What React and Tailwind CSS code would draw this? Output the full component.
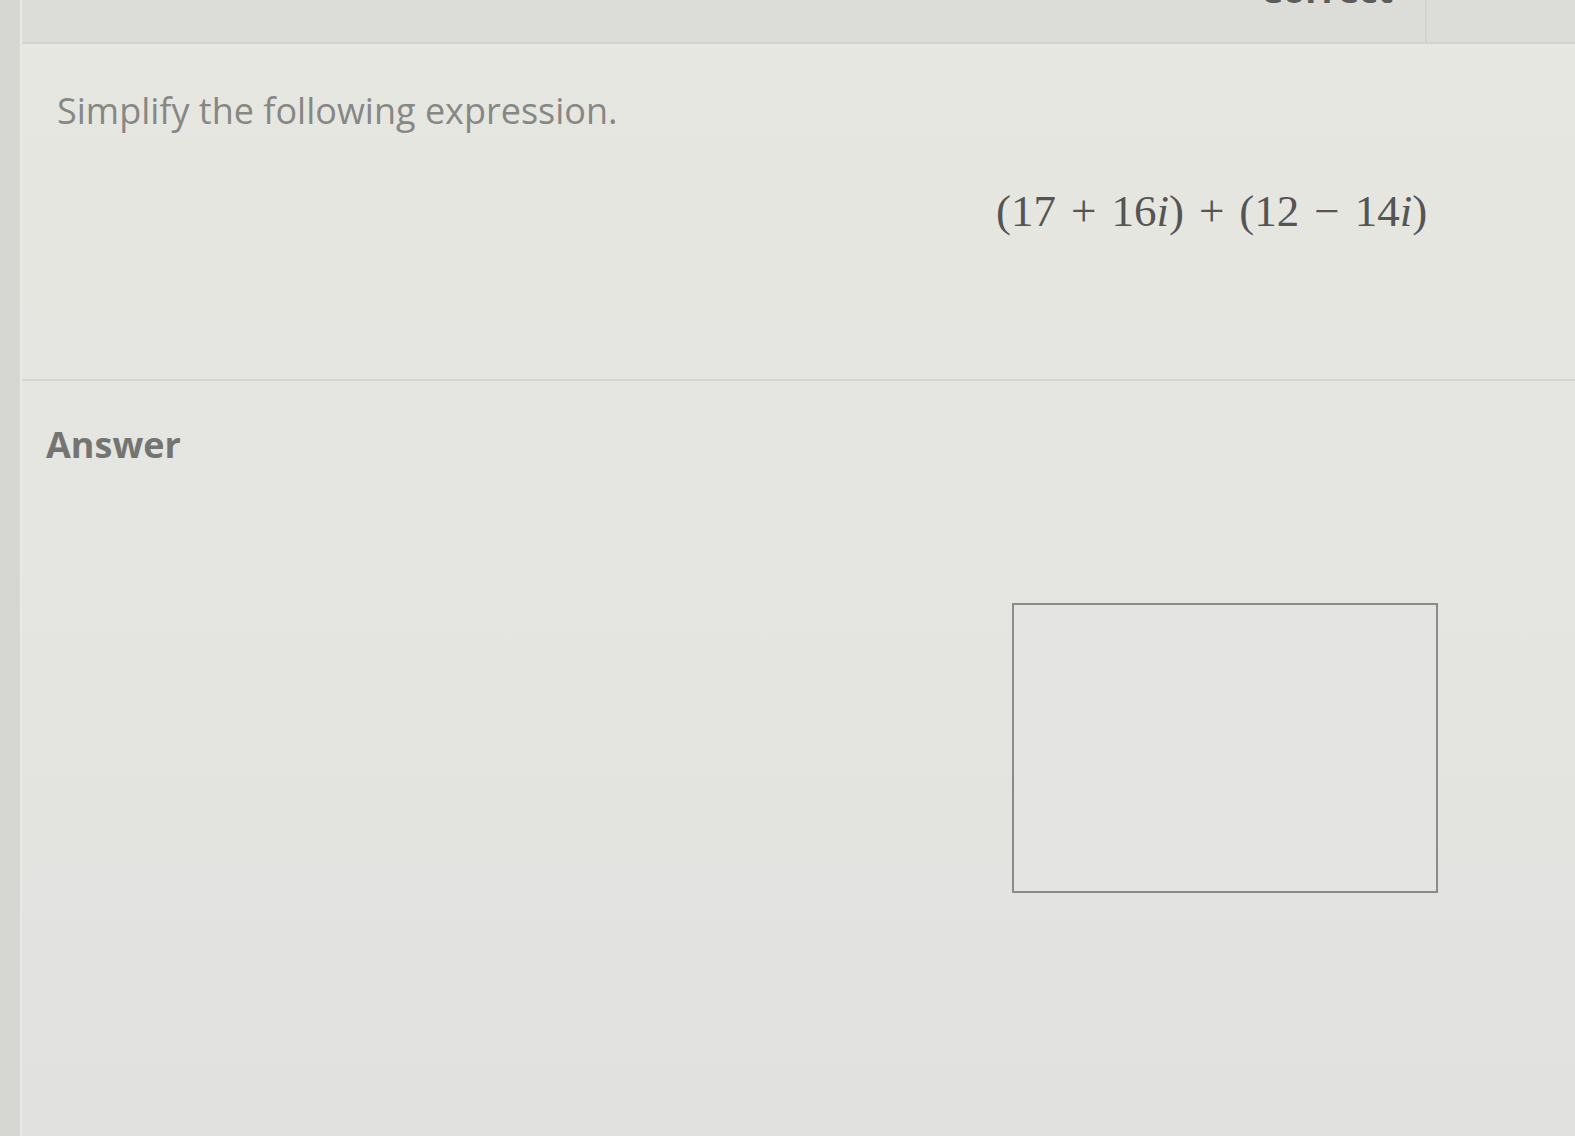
export default function App() {
  return (
    <div className="flex h-[1136px] w-full overflow-hidden bg-[#d5d5d2] font-['Open_Sans',sans-serif]">
      {/* left gutter */}
      <div className="w-[20px] shrink-0 bg-[#d6d6d3]" />

      <div className="flex flex-1 flex-col bg-linear-to-b from-[#e7e7e1] via-[#e5e5e1] to-[#e1e1e0] border-l-2 border-[#e9e9e6]">
        {/* status bar */}
        <div className="flex h-[44px] shrink-0 border-b-2 border-[#d3d3cf] bg-[#dcdcd8]">
          <div className="flex-1" />
          <div className="w-[200px] overflow-hidden">
            <p className="-mt-[30px] pl-[35px] text-[36px] font-bold leading-[40px] text-[#5c5c5c]">
              Correct
            </p>
          </div>
          <div className="w-[150px] border-l-2 border-[#d2d2ce]" />
        </div>

        {/* question */}
        <div className="flex h-[337px] shrink-0 flex-col border-b-2 border-[#d4d4d0]">
          <p className="mt-[46px] pl-[35px] text-[36px] leading-[42px] text-[#878785]">
            Simplify the following expression.
          </p>
          <p className="mt-[53px] pl-[974px] font-['Liberation_Serif',serif] text-[45px] leading-[52px] text-[#555554]">
            (17<span className="mx-[15px]">+</span>16<i>i</i>)
            <span className="mx-[15px]">+</span>(12<span className="mx-[15px]">−</span>14<i>i</i>)
          </p>
        </div>

        {/* answer */}
        <div className="flex flex-1 flex-col">
          <p className="mt-[44px] pl-[24px] text-[36px] font-bold leading-[40px] text-[#747472]">
            Answer
          </p>
          <div className="mt-[138px] ml-[990px] h-[290px] w-[426px] border-2 border-[#8b8b8a] bg-[#e4e4e3]" />
        </div>
      </div>
    </div>
  );
}
